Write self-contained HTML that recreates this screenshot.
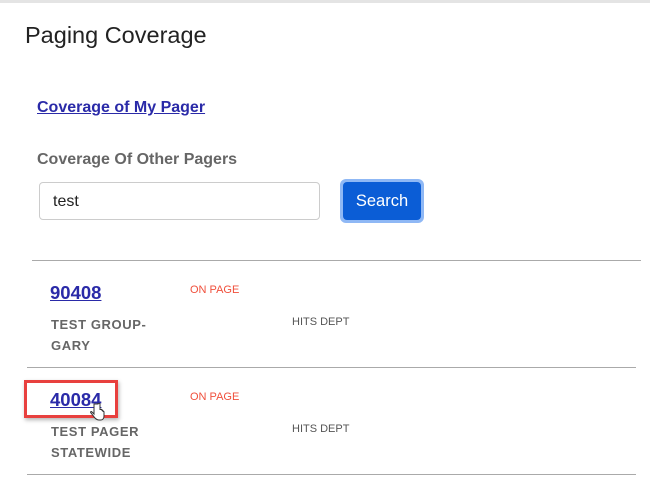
<!DOCTYPE html>
<html><head><style>
body{margin:0;width:650px;height:491px;background:#fff;font-family:"Liberation Sans",Arial,sans-serif;position:relative;overflow:hidden}
.a{position:absolute;white-space:nowrap}
.top{position:absolute;left:0;top:0;width:650px;height:3px;background:#e4e4e4}
h1{position:absolute;left:25px;top:22px;margin:0;font-size:23.5px;font-weight:normal;color:#222}
.lnk{color:#2a2aa8;font-weight:bold;text-decoration:underline}
.lbl{color:#666;font-weight:bold;font-size:16px}
.inp{position:absolute;left:39px;top:182px;width:281px;height:38px;border:1px solid #ccc;border-radius:4px;box-sizing:border-box;font-size:16px;padding:10px 13px;color:#222}
.btn{position:absolute;left:340px;top:179px;width:84px;height:44px;background:#8fb8f5;border-radius:6px}
.btn div{position:absolute;left:3px;top:3px;right:3px;bottom:3px;background:#0b5dd6;border-radius:4px;color:#fff;font-size:16.5px;text-align:center;line-height:38px}
.hr{position:absolute;height:1px;background:#aaa}
.num{color:#2a2aa8;font-weight:bold;font-size:18.5px;text-decoration:underline}
.on{color:#f0503c;font-size:11px}
.nm{color:#666;font-weight:bold;font-size:13px;letter-spacing:.6px}
.dp{color:#555;font-size:11px}
</style></head><body>
<div class="top"></div>
<h1>Paging Coverage</h1>
<div class="a lnk" style="left:37px;top:99px;font-size:16px">Coverage of My Pager</div>
<div class="a lbl" style="left:37px;top:151px">Coverage Of Other Pagers</div>
<div class="inp">test</div>
<div class="btn"><div>Search</div></div>
<div class="hr" style="left:32px;top:260px;width:609px"></div>
<div class="a num" style="left:50px;top:282px">90408</div>
<div class="a on" style="left:190px;top:284px">ON PAGE</div>
<div class="a nm" style="left:51px;top:317px">TEST GROUP-</div>
<div class="a nm" style="left:51px;top:338px">GARY</div>
<div class="a dp" style="left:292px;top:316px">HITS DEPT</div>
<div class="hr" style="left:27px;top:367px;width:609px"></div>
<div class="a num" style="left:50px;top:389px">40084</div>
<div class="a on" style="left:190px;top:391px">ON PAGE</div>
<div style="position:absolute;left:24px;top:380px;width:94px;height:38px;border:3px solid #e8403e;box-sizing:border-box;box-shadow:1px 2px 4px rgba(0,0,0,.3)"></div>
<div class="a nm" style="left:51px;top:424px">TEST PAGER</div>
<div class="a nm" style="left:51px;top:445px">STATEWIDE</div>
<div class="a dp" style="left:292px;top:423px">HITS DEPT</div>
<div class="hr" style="left:27px;top:474px;width:609px"></div>
<svg style="position:absolute;left:89px;top:403px" width="16" height="20" viewBox="0 0 16 20"><path d="M5 1v10l-2-2c-1-1-2 0-1 1l4 5c1 1 2 2 4 2h2c2 0 3-2 3-4V9c0-1-1-1-1 0V8c0-1-1-1-1 0V7c0-1-1-1-1 0V7c0-1-1-1-1 0V1c0-1-2-1-2 0z" fill="#fff" stroke="#333" stroke-width="1"/></svg>
</body></html>
